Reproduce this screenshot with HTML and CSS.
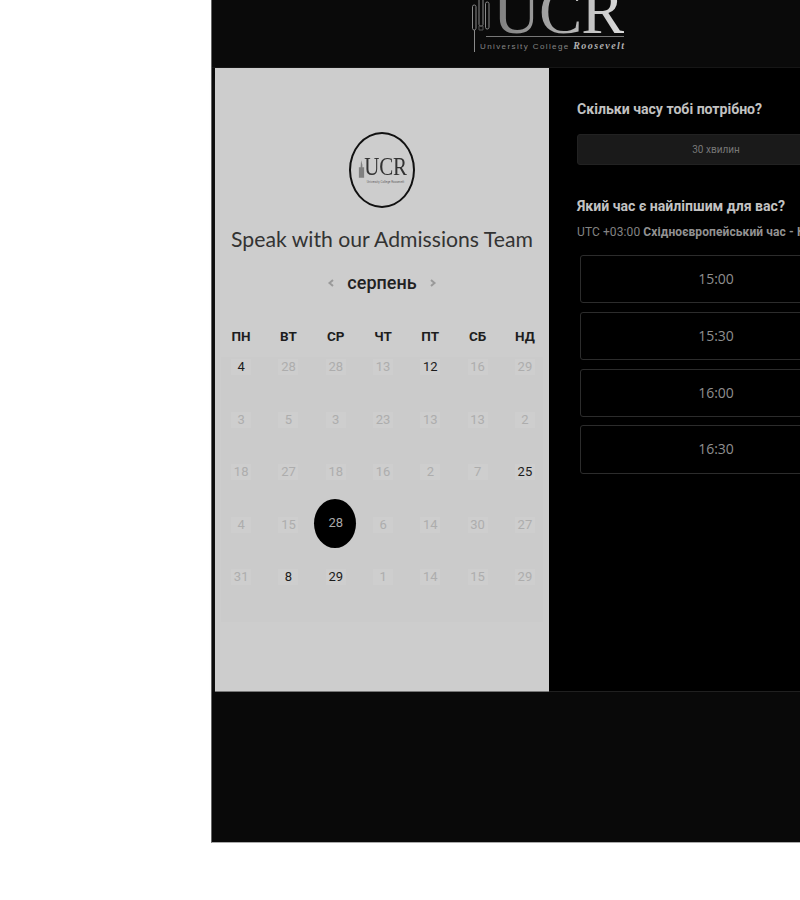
FILE: index.html
```html
<!DOCTYPE html>
<html lang="uk">
<head>
<meta charset="utf-8">
<title>Speak with our Admissions Team</title>
<link rel="stylesheet" href="styles.css">
</head>
<body>
<div class="app">
  <header class="top">
    <div class="brand">
      <svg class="tower" viewBox="0 0 22 54" width="22" height="54" aria-hidden="true">
        <g fill="none" stroke="#8a8a8a" stroke-width="1">
          <rect x="1.500" y="5" width="3.500" height="25" rx="1.700"/>
          <rect x="8" y="-4" width="4" height="30" rx="1.500"/>
          <rect x="14.500" y="2" width="3.500" height="27" rx="1.700"/>
          <path d="M3.500 30 V52"/>
          <path d="M8 26 H12 L12 30 H8 Z" stroke="#555"/>
        </g>
      </svg>
      <div class="brand-text">
        <div class="brand-mark">UCR</div>
        <div class="brand-sub">University College <i>Roosevelt</i></div>
      </div>
    </div>
  </header>
  <main class="main">
    <section class="left">
      <div class="badge">
        <svg class="badge-tower" viewBox="0 0 8 20" width="7" height="20" aria-hidden="true">
          <path d="M3.500 0 L5 5 V8 H7 V20 H1 V8 H3 Z" fill="#808080"/>
        </svg>
        <div class="badge-text">
          <div class="badge-mark">UCR</div>
          <div class="badge-sub">University College Roosevelt</div>
        </div>
      </div>
      <h1 class="title">Speak with our Admissions Team</h1>
      <div class="month">
        <svg class="chev" viewBox="0 0 8 12" width="8" height="12" aria-hidden="true"><path d="M6 3 L2.500 6 L6 9" fill="none" stroke="#9a9a9a" stroke-width="2"/></svg>
        <span class="month-name">серпень</span>
        <svg class="chev" viewBox="0 0 8 12" width="8" height="12" aria-hidden="true"><path d="M2 3 L5.500 6 L2 9" fill="none" stroke="#9a9a9a" stroke-width="2"/></svg>
      </div>
      <div class="weekdays">
        <span>ПН</span><span>ВТ</span><span>СР</span><span>ЧТ</span><span>ПТ</span><span>СБ</span><span>НД</span>
      </div>
      <div class="cal">
        <div class="days">
          <div class="day on"><span>4</span></div><div class="day"><span>28</span></div><div class="day"><span>28</span></div><div class="day"><span>13</span></div><div class="day on"><span>12</span></div><div class="day"><span>16</span></div><div class="day"><span>29</span></div>
          <div class="day"><span>3</span></div><div class="day"><span>5</span></div><div class="day"><span>3</span></div><div class="day"><span>23</span></div><div class="day"><span>13</span></div><div class="day"><span>13</span></div><div class="day"><span>2</span></div>
          <div class="day"><span>18</span></div><div class="day"><span>27</span></div><div class="day"><span>18</span></div><div class="day"><span>16</span></div><div class="day"><span>2</span></div><div class="day"><span>7</span></div><div class="day on"><span>25</span></div>
          <div class="day"><span>4</span></div><div class="day"><span>15</span></div><div class="day sel"><span>28</span></div><div class="day"><span>6</span></div><div class="day"><span>14</span></div><div class="day"><span>30</span></div><div class="day"><span>27</span></div>
          <div class="day"><span>31</span></div><div class="day on"><span>8</span></div><div class="day on"><span>29</span></div><div class="day"><span>1</span></div><div class="day"><span>14</span></div><div class="day"><span>15</span></div><div class="day"><span>29</span></div>
        </div>
      </div>
    </section>
    <section class="right">
      <h2 class="q q-first">Скільки часу тобі потрібно?</h2>
      <div class="duration">30 хвилин</div>
      <h2 class="q q-second">Який час є найліпшим для вас?</h2>
      <p class="tz">UTC +03:00 <b>Східноєвропейський час - Київ</b></p>
      <div class="slots">
        <div class="slot">15:00</div>
        <div class="slot">15:30</div>
        <div class="slot">16:00</div>
        <div class="slot">16:30</div>
      </div>
    </section>
  </main>
  <footer class="bottom"></footer>
</div>
</body>
</html>
```
FILE: styles.css
```css
html, body { margin: 0; padding: 0; background: #fff; overflow: hidden; height: 900px; }
body { font-family: Roboto, "Liberation Sans", Arial, sans-serif; }
.app { width: 678px; margin-left: 211px; background: #0a0a0a; border-left: 1px solid #666; border-bottom: 1px solid #aaa; height: 843px; box-sizing: border-box; display: flex; flex-direction: column; }

.top { height: 68px; flex: none; overflow: hidden; display: flex; justify-content: center; box-sizing: border-box; padding-right: 3px; border-bottom: 1px solid #161616; }
.brand { display: flex; align-items: flex-start; gap: 3px; height: 68px; }
.brand-text { display: flex; flex-direction: column; width: 131px; }
.brand-mark { font-family: "Liberation Serif", serif; font-size: 65px; line-height: 64px; height: 57px; margin: -21px 3px 0 -10px; padding-left: 7px; letter-spacing: -1px; white-space: nowrap; background: linear-gradient(90deg, #777, #a8a8a8 50%, #dcdcdc); -webkit-background-clip: text; background-clip: text; color: transparent; border-bottom: 1px solid #777; }
.brand-sub { font-family: "Liberation Sans", sans-serif; font-size: 8px; line-height: 12px; letter-spacing: 1.400px; color: #858585; margin: 3px 0 0 -16px; white-space: nowrap; }
.brand-sub i { font-family: "Liberation Serif", serif; font-size: 10px; font-weight: bold; color: #b0b0b0; }

.main { display: flex; height: 624px; flex: none; margin-left: 3px; }
.left { width: 334px; flex: none; background: #cdcdcd; box-sizing: border-box; border-bottom: 1px solid #777; box-shadow: 0 7px 8px -4px rgba(130,130,130,.4); display: flex; flex-direction: column; align-items: center; }
.right { width: 334px; flex: none; background: #000; box-sizing: border-box; padding: 32px 28px 0; border-bottom: 1px solid #202020; }

.badge { margin-top: 64px; width: 66px; height: 76px; box-sizing: border-box; border: 2px solid #111; border-radius: 50%; display: flex; align-items: center; justify-content: center; gap: 0; flex: none; }
.badge-tower { margin-top: -2px; }
.badge-text { display: flex; flex-direction: column; align-items: center; width: 42px; }
.badge-mark { font-family: "Liberation Serif", serif; font-size: 21px; line-height: 21px; letter-spacing: -.3px; color: #333; transform: scaleY(1.180); }
.badge-sub { font-size: 3px; line-height: 4px; margin-top: 2px; color: #666; white-space: nowrap; }

.title { margin: 15px 0 0; font-family: Lato, sans-serif; font-weight: 400; font-size: 21.200px; line-height: 32px; color: #333; white-space: nowrap; }
.month { display: flex; align-items: center; justify-content: center; gap: 12px; margin-top: 13px; height: 30px; }
.month-name { font-size: 18px; font-weight: 500; line-height: 30px; color: #222; }
.chev { flex: none; }

.weekdays { display: grid; grid-template-columns: repeat(7, 47.300px); margin: 28px 0 0 2px; font-size: 13.500px; font-weight: 700; color: #1d1d1d; text-align: center; line-height: 20px; }

.cal { width: 322px; background: #cbcbcb; margin-top: 11px; height: 265px; flex: none; }
.days { display: grid; grid-template-columns: repeat(7, 47.300px); grid-auto-rows: 52.600px; margin: 0 -5.500px 0 -3.500px; width: 331px; }
.day { display: flex; align-items: flex-start; justify-content: center; padding-top: 2px; box-sizing: border-box; font-size: 13px; line-height: 16px; color: #adadad; position: relative; }
.day span { min-width: 20px; text-align: center; background: #cecece; position: relative; }
.day.on { color: #1c1c1c; }
.day.sel { color: #a9a9a9; }
.day.sel::before { content: ""; position: absolute; left: 1.800px; top: -16px; width: 42px; height: 49px; border-radius: 50%; background: #000; }
.day.sel span { background: none; margin-top: -2px; }

.q { margin: 0; font-size: 14.100px; font-weight: 700; line-height: 18px; color: #c2c2c2; white-space: nowrap; }
.duration { margin-top: 16px; height: 31px; line-height: 29px; box-sizing: border-box; border: 1px solid #222; border-radius: 3px; background: #1a1a1a; color: #777; font-size: 10px; text-align: center; }
.q-second { margin-top: 32px; }
.tz { margin: 9px 0 0; font-size: 12px; letter-spacing: .1px; line-height: 16px; color: #838383; white-space: nowrap; }
.tz b { color: #929292; }
.slots { margin: 15px 3px 0; display: flex; flex-direction: column; gap: 8.600px; }
.slot { height: 48.200px; box-sizing: border-box; border: 1px solid #2c2c2c; border-radius: 3px; text-align: center; line-height: 46px; font-family: "Open Sans", sans-serif; font-size: 14px; color: #8f8f8f; }

.bottom { flex: 1; background: #090909; }
```
